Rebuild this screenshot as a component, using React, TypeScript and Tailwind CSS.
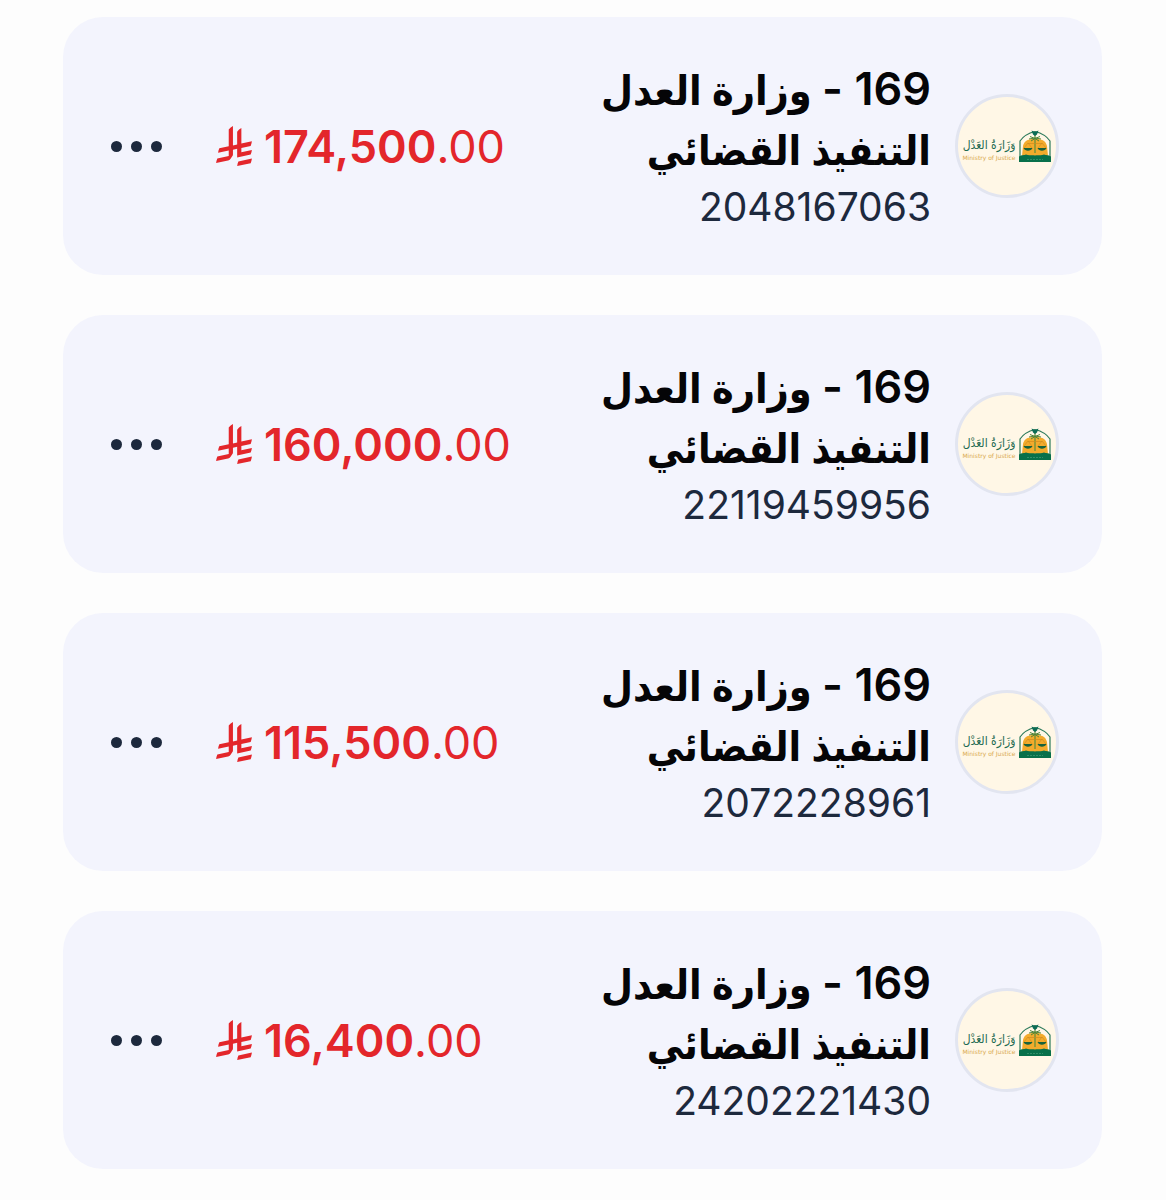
const entries = [
  { id: "2048167063", whole: "174,500", cents: ".00" },
  { id: "22119459956", whole: "160,000", cents: ".00" },
  { id: "2072228961", whole: "115,500", cents: ".00" },
  { id: "24202221430", whole: "16,400", cents: ".00" },
];

function Riyal() {
  return (
    <svg viewBox="0 0 1124.14 1256.39" className="h-10 w-9 shrink-0" fill="currentColor" role="img" aria-label="ريال">
      <path d="M699.62,1113.02h0c-20.06,44.48-33.32,92.75-38.4,143.37l424.51-90.24c20.06-44.47,33.31-92.75,38.4-143.37l-424.51,90.24Z" />
      <path d="M1085.73,895.8c20.06-44.47,33.32-92.75,38.4-143.37l-330.68,70.33v-135.2l292.27-62.11c20.06-44.47,33.32-92.75,38.4-143.37l-330.68,70.27V66.13c-50.67,28.45-95.67,66.32-132.25,110.99v403.35l-132.25,28.11V0c-50.67,28.44-95.67,66.32-132.25,110.99v525.69l-295.91,62.88c-20.06,44.47-33.33,92.75-38.42,143.37l334.33-71.05v170.26l-358.3,76.14c-20.06,44.47-33.32,92.75-38.4,143.37l375.04-79.7c30.53-6.35,56.77-24.4,73.83-49.24l68.78-101.97v-.02c7.14-10.55,11.3-23.27,11.3-36.97v-149.98l132.25-28.11v270.4l424.53-90.28Z" />
    </svg>
  );
}

function Emblem() {
  return (
    <svg viewBox="0 0 32 34" className="h-[34px] w-8 shrink-0" fill="none" aria-hidden="true">
      <path d="M1 32V12C4 7.500 10 4 16 2.500C22 4 28 7.500 31 12V32" stroke="#2c7a5b" strokeWidth="1.200" />
      <path d="M3 27L4 17C5 12.500 8 11 11 10.500C13 9 19 9 21 10.500C24 11 27 12.500 28 17L29 27Z" fill="#f3ab2c" />
      <path d="M16 6V24" stroke="#5d8f3c" strokeWidth="1.200" />
      <path d="M11 7.500L16 9.500L21 7.500M12 12L16 9.500L20 12M10 10L16 9L22 10" stroke="#4f8439" strokeWidth="1" />
      <path d="M5 19L9 14L13 19M19 19L23 14L27 19M9 14.500H23" stroke="#cf8c1e" strokeWidth="0.700" />
      <path d="M4.500 19H13.500C12 22.500 6 22.500 4.500 19ZM18.500 19H27.500C26 22.500 20 22.500 18.500 19Z" fill="#17623b" />
      <path d="M12.500 1.500L16 3L19.500 1.500L18 5.500L16 7L14 5.500Z" fill="#0b6b55" />
      <path d="M0 27.500C3 25.500 5 26.500 7 25.500C10 27 13 25.500 16 26.500C19 25.500 22 27 25 25.500C27 26.500 29 25.500 32 27.500V33H0Z" fill="#08704a" />
      <path d="M8 30.500H24" stroke="#3a9670" strokeWidth="0.800" strokeDasharray="2 1" />
    </svg>
  );
}

function MinistryLogo() {
  return (
    <div className="flex size-[104px] shrink-0 items-center justify-center gap-1 rounded-full border-[3px] border-[#e2e5f0] bg-[#fff7e6]">
      <Emblem />
      <div className="flex w-[52px] flex-col items-center pt-1 whitespace-nowrap">
        <span className="font-['DejaVu_Sans_Condensed','DejaVu_Sans',sans-serif] text-[12px] leading-5 text-[#1f6b52]">وَزَارَةُ العَدْل</span>
        <span dir="ltr" className="font-['DejaVu_Sans',sans-serif] text-[6px] leading-[6px] text-[#d9a94e]">Ministry of Justice</span>
      </div>
    </div>
  );
}

function Card({ id, whole, cents }: { id: string; whole: string; cents: string }) {
  return (
    <li className="flex min-h-[258px] items-center rounded-[40px] bg-[#f3f4fd] pr-[43px] pl-12">
      <MinistryLogo />
      <div className="mr-6 min-w-0 grow text-right">
        <h2 className="text-[41px] leading-[60px] font-semibold text-[#050507]">
          <span className="text-[45px]">169 -</span> وزارة العدل
          <br />
          التنفيذ القضائي
        </h2>
        <p className="text-[39px] leading-[54px] text-[#1d293d]">{id}</p>
      </div>
      <div dir="ltr" className="flex w-[300px] shrink-0 items-center gap-3 text-[#e3262b]">
        <Riyal />
        <p className="pt-0.5 text-[45px] leading-[60px]">
          <span className="font-semibold">{whole}</span>
          {cents}
        </p>
      </div>
      <button type="button" aria-label="المزيد" className="mr-[54px] flex shrink-0 gap-[9px] py-4">
        <span className="size-[11px] rounded-full bg-[#1d293d]" />
        <span className="size-[11px] rounded-full bg-[#1d293d]" />
        <span className="size-[11px] rounded-full bg-[#1d293d]" />
      </button>
    </li>
  );
}

export default function App() {
  return (
    <main dir="rtl" lang="ar" className="min-h-screen bg-[#fdfdfd] pt-[17px] pr-16 pb-[31px] pl-[63px] font-[Inter,'DejaVu_Sans_Condensed','DejaVu_Sans',sans-serif]">
      <ul className="flex flex-col gap-10">
        {entries.map((e) => (
          <Card key={e.id} {...e} />
        ))}
      </ul>
    </main>
  );
}
